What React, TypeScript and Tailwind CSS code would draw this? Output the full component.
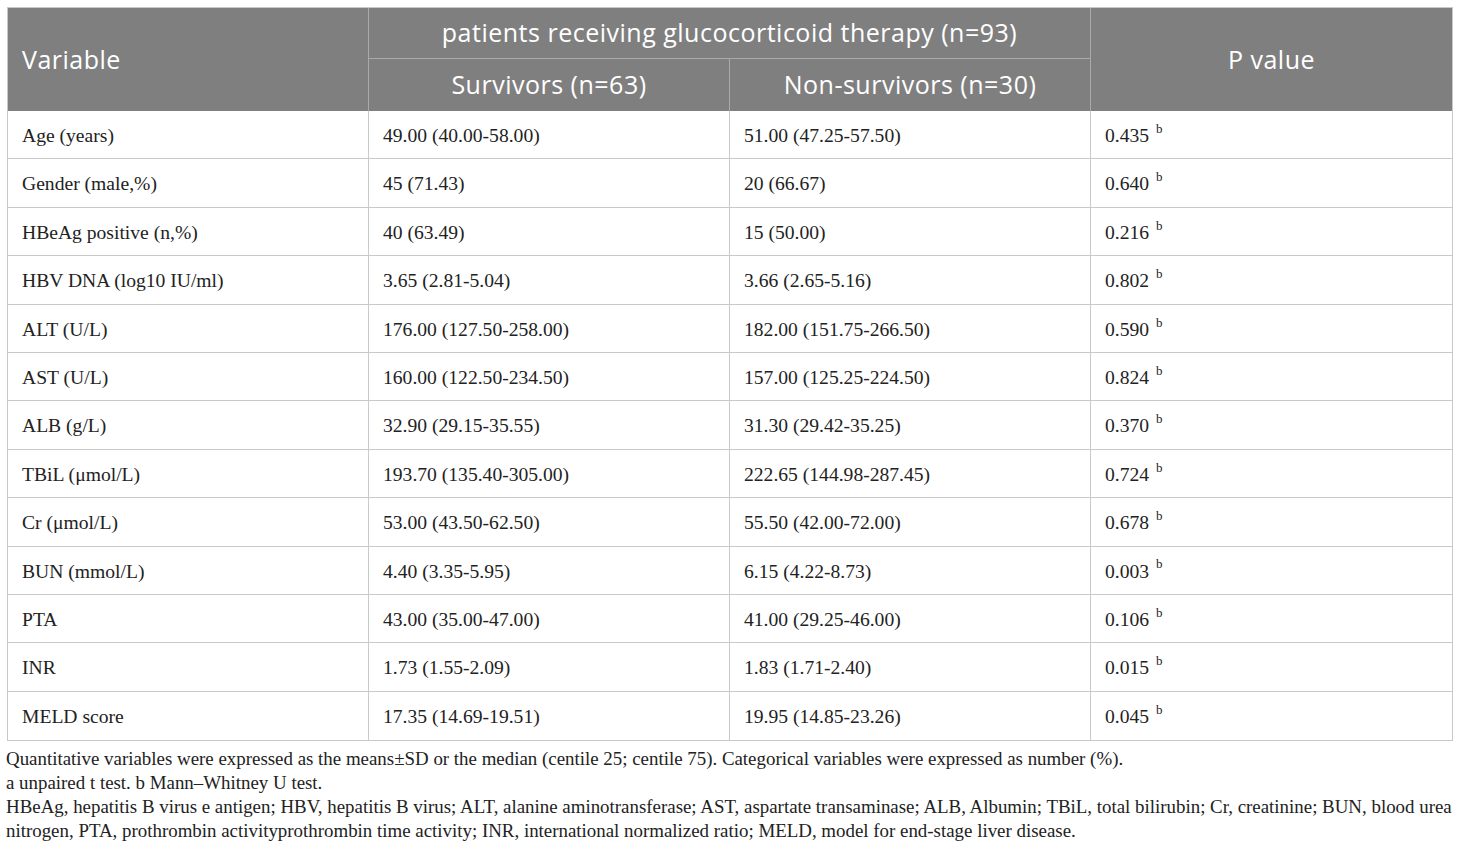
const ROWS: [string, string, string, string][] = [
  ['Age (years)', '49.00 (40.00-58.00)', '51.00 (47.25-57.50)', '0.435'],
  ['Gender (male,%)', '45 (71.43)', '20 (66.67)', '0.640'],
  ['HBeAg positive (n,%)', '40 (63.49)', '15 (50.00)', '0.216'],
  ['HBV DNA (log10 IU/ml)', '3.65 (2.81-5.04)', '3.66 (2.65-5.16)', '0.802'],
  ['ALT (U/L)', '176.00 (127.50-258.00)', '182.00 (151.75-266.50)', '0.590'],
  ['AST (U/L)', '160.00 (122.50-234.50)', '157.00 (125.25-224.50)', '0.824'],
  ['ALB (g/L)', '32.90 (29.15-35.55)', '31.30 (29.42-35.25)', '0.370'],
  ['TBiL (\u03bcmol/L)', '193.70 (135.40-305.00)', '222.65 (144.98-287.45)', '0.724'],
  ['Cr (\u03bcmol/L)', '53.00 (43.50-62.50)', '55.50 (42.00-72.00)', '0.678'],
  ['BUN (mmol/L)', '4.40 (3.35-5.95)', '6.15 (4.22-8.73)', '0.003'],
  ['PTA', '43.00 (35.00-47.00)', '41.00 (29.25-46.00)', '0.106'],
  ['INR', '1.73 (1.55-2.09)', '1.83 (1.71-2.40)', '0.015'],
  ['MELD score', '17.35 (14.69-19.51)', '19.95 (14.85-23.26)', '0.045'],
];

const serif = { fontFamily: '"Liberation Serif", serif' };

export default function App() {
  return (
    <div className="bg-white w-[1460px] h-[850px] pt-[7px] text-[#222]">
      <div className="ml-[7px] w-[1446px] border border-[#c9c9c9]">
        {/* header */}
        <div
          className="flex bg-[#7f7f7f] text-white h-[103px] text-[25px] tracking-[0.5px]"
          style={{ fontFamily: '"Open Sans", sans-serif' }}
        >
          <div className="w-[361px] flex items-center pl-[14px] border-r border-[#a9a9a9]">Variable</div>
          <div className="w-[722px] flex flex-col border-r border-[#a9a9a9]">
            <div className="h-[51px] flex items-center justify-center border-b border-[#a9a9a9]">
              patients receiving glucocorticoid therapy (n=93)
            </div>
            <div className="flex flex-1">
              <div className="w-[361px] flex items-center justify-center border-r border-[#a9a9a9]">
                Survivors (n=63)
              </div>
              <div className="flex-1 flex items-center justify-center">Non-survivors (n=30)</div>
            </div>
          </div>
          <div className="flex-1 flex items-center justify-center">P value</div>
        </div>

        {/* body */}
        <div className="text-[19.6px]" style={serif}>
          {ROWS.map((r, i) => (
            <div
              key={r[0]}
              className={`flex h-[48.4px] ${i < ROWS.length - 1 ? 'border-b border-[#c9c9c9]' : ''}`}
            >
              <div className="w-[361px] flex items-center pl-[14px] pt-[2px] border-r border-[#c9c9c9]">{r[0]}</div>
              <div className="w-[361px] flex items-center pl-[14px] pt-[2px] border-r border-[#c9c9c9]">{r[1]}</div>
              <div className="w-[361px] flex items-center pl-[14px] pt-[2px] border-r border-[#c9c9c9]">{r[2]}</div>
              <div className="flex-1 flex items-center pl-[14px] pt-[2px]">
                {r[3]}
                <span className="text-[13px] ml-[7px] relative -top-[7px]">b</span>
              </div>
            </div>
          ))}
        </div>
      </div>

      <div className="pl-[6px] pt-[6px] text-[18.9px] leading-[24px] whitespace-nowrap" style={serif}>
        <p>
          Quantitative variables were expressed as the means±SD or the median (centile 25; centile 75). Categorical
          variables were expressed as number (%).
        </p>
        <p>a unpaired t test. b Mann–Whitney U test.</p>
        <p>
          HBeAg, hepatitis B virus e antigen; HBV, hepatitis B virus; ALT, alanine aminotransferase; AST, aspartate
          transaminase; ALB, Albumin; TBiL, total bilirubin; Cr, creatinine; BUN, blood urea
          <br />
          nitrogen, PTA, prothrombin activityprothrombin time activity; INR, international normalized ratio; MELD,
          model for end-stage liver disease.
        </p>
      </div>
    </div>
  );
}
